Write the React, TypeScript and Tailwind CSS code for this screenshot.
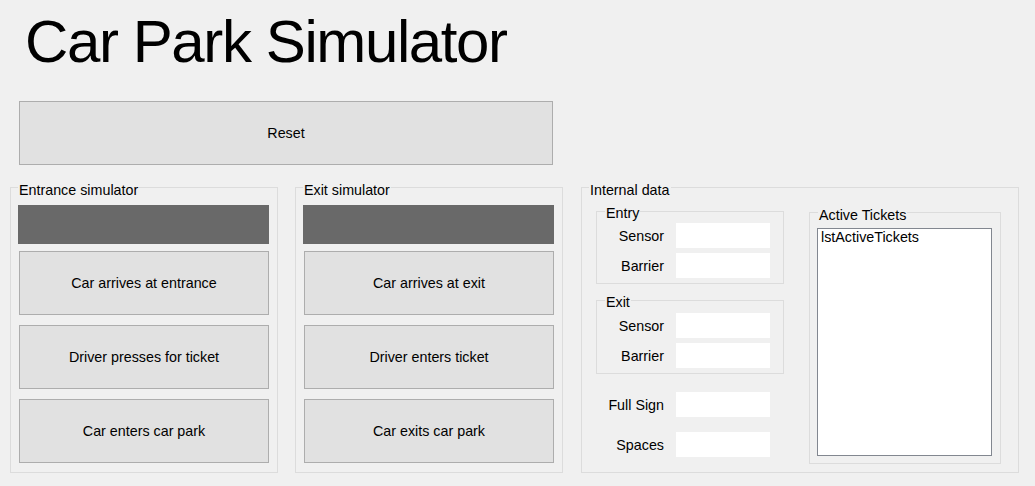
import React from "react";

const font = { fontFamily: '"Liberation Sans", Arial, sans-serif' };

function WinButton({ label, className = "" }: { label: string; className?: string }) {
  return (
    <div
      className={`flex items-center justify-center border border-[#adadad] bg-[#e1e1e1] text-[14.3px] leading-[16px] text-black ${className}`}
    >
      {label}
    </div>
  );
}

function Group({
  label,
  className = "",
  labelClass = "",
  children,
}: {
  label: string;
  className?: string;
  labelClass?: string;
  children?: React.ReactNode;
}) {
  return (
    <div className={`relative border border-[#dcdcdc] ${className}`}>
      <span
        className={`absolute bg-[#f0f0f0] px-[1px] text-[14.3px] leading-[14px] text-black whitespace-nowrap ${labelClass}`}
      >
        {label}
      </span>
      {children}
    </div>
  );
}

function Field({ label, labelW = "w-[67px]" }: { label: string; labelW?: string }) {
  return (
    <div className="flex items-center">
      <span className={`${labelW} text-right text-[14.3px] leading-[16px] text-black`}>{label}</span>
      <div className="ml-[12px] h-[25px] w-[94px] bg-white" />
    </div>
  );
}

function Simulator({ label, buttons }: { label: string; buttons: string[] }) {
  return (
    <Group label={label} className="w-[268px] h-[286px] pl-[7px] pt-[17px]" labelClass="-top-[5px] left-[7px]">
      <div className="h-[39px] w-[251px] bg-[#696969]" />
      <div className="mt-[7px] ml-[1px] flex flex-col gap-[10px]">
        {buttons.map((b) => (
          <WinButton key={b} label={b} className="h-[64px] w-[250px]" />
        ))}
      </div>
    </Group>
  );
}

export default function App() {
  return (
    <div className="w-[1035px] h-[486px] overflow-hidden bg-[#f0f0f0]" style={font}>
      <div className="pt-[12px] pl-[25px]">
        <h1 className="h-[60px] text-[60px] leading-[60px] tracking-[-1.4px] text-black font-normal whitespace-nowrap">
          Car Park Simulator
        </h1>
      </div>

      <WinButton label="Reset" className="mt-[29px] ml-[19px] h-[64px] w-[534px]" />

      <div className="mt-[22px] ml-[10px] flex gap-[17px]">
        <Simulator
          label="Entrance simulator"
          buttons={["Car arrives at entrance", "Driver presses for ticket", "Car enters car park"]}
        />
        <Simulator
          label="Exit simulator"
          buttons={["Car arrives at exit", "Driver enters ticket", "Car exits car park"]}
        />

        <Group
          label="Internal data"
          className="ml-[1px] w-[438px] h-[286px] flex pl-[14px]"
          labelClass="-top-[5px] left-[7px]"
        >
          <div className="mt-[23px] flex flex-col">
            <Group
              label="Entry"
              className="w-[188px] h-[73px] pt-[11px] flex flex-col gap-[5px]"
              labelClass="-top-[6px] left-[8px]"
            >
              <Field label="Sensor" />
              <Field label="Barrier" />
            </Group>
            <Group
              label="Exit"
              className="mt-[16px] w-[188px] h-[74px] pt-[12px] flex flex-col gap-[5px]"
              labelClass="-top-[6px] left-[8px]"
            >
              <Field label="Sensor" />
              <Field label="Barrier" />
            </Group>
            <div className="mt-[18px] flex flex-col gap-[15px]">
              <Field label="Full Sign" labelW="w-[68px]" />
              <Field label="Spaces" labelW="w-[68px]" />
            </div>
          </div>

          <Group
            label="Active Tickets"
            className="ml-[25px] mt-[24px] w-[192px] h-[252px] pl-[7px] pt-[15px]"
            labelClass="-top-[5px] left-[8px]"
          >
            <div className="h-[228px] w-[175px] border border-[#828790] bg-white pl-[3px] text-[14.3px] leading-[16px] text-black">
              lstActiveTickets
            </div>
          </Group>
        </Group>
      </div>
    </div>
  );
}
